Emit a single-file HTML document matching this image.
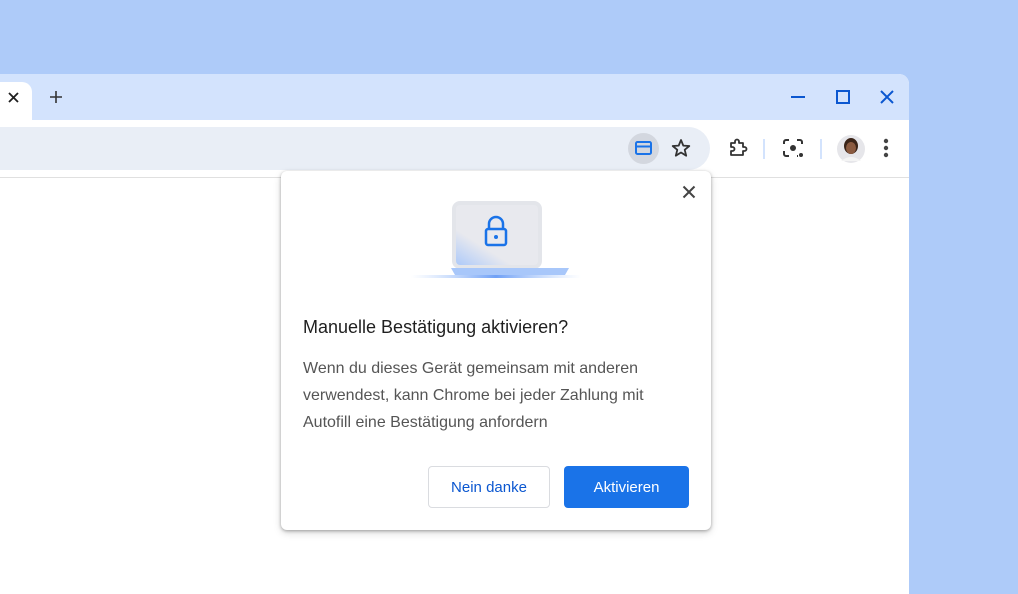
<!DOCTYPE html>
<html><head><meta charset="utf-8"><style>
*{margin:0;padding:0;box-sizing:border-box}
body{width:1018px;height:573px;background:#aecbf9;position:relative;overflow:hidden;font-family:"Liberation Sans",sans-serif}
.win{position:absolute;left:0;top:74px;width:909px;height:520px;background:#fff;border-top-right-radius:10px;overflow:hidden}
.strip{position:absolute;left:0;top:0;width:909px;height:46px;background:#d3e3fd}
.tab{position:absolute;left:0;top:8px;width:32px;height:40px;background:#fff;border-top-right-radius:10px}
.tb{position:absolute;left:0;top:46px;width:909px;height:58px;background:#fff;border-bottom:1px solid #e0e0e0}
.omni{position:absolute;left:0;top:7px;width:710px;height:43px;background:#e9eef6;border-radius:0 22px 22px 0}
.dlg{position:absolute;left:281px;top:171px;width:430px;height:359px;background:#fff;border-radius:6px;box-shadow:0 1px 3px rgba(0,0,0,.3),0 3px 8px rgba(0,0,0,.15)}
.t{position:absolute;left:22px;top:146px;font-size:18px;color:#1f1f1f}
.b{position:absolute;left:22px;top:184px;width:380px;font-size:16px;line-height:27px;color:#555}
.btn{position:absolute;top:295px;height:42px;border-radius:4px;font-size:15px;display:flex;align-items:center;justify-content:center}
</style></head><body>
<div class="win">
 <div class="strip"></div>
 <div class="tab"></div>
 <svg style="position:absolute;left:7px;top:17px" width="13" height="13"><path d="M2 2L11 11M11 2L2 11" stroke="#1f1f1f" stroke-width="1.8"/></svg>
 <svg style="position:absolute;left:49px;top:16px" width="14" height="14"><path d="M7 1V13M1 7H13" stroke="#333" stroke-width="1.6"/></svg>
 <svg style="position:absolute;left:790px;top:15px" width="110" height="16"><path d="M1 8H15" stroke="#0b57d0" stroke-width="2"/><rect x="47" y="2" width="12" height="12" fill="none" stroke="#0b57d0" stroke-width="2"/><path d="M91 2L103 14M103 2L91 14" stroke="#0b57d0" stroke-width="2"/></svg>
 <div class="tb">
  <div class="omni"></div>
  <div style="position:absolute;left:628px;top:13px;width:31px;height:31px;border-radius:50%;background:#d3d7df"></div>
  <svg style="position:absolute;left:635px;top:21px" width="17" height="15"><rect x="1" y="1" width="15" height="12" rx="1.5" fill="none" stroke="#1a73e8" stroke-width="2"/><path d="M1 5.5H16" stroke="#1a73e8" stroke-width="2"/></svg>
  <svg style="position:absolute;left:671px;top:18px" width="20" height="20"><path d="M10 2L12.3 7.6L18.3 8L13.7 11.8L15.2 17.7L10 14.5L4.8 17.7L6.3 11.8L1.7 8L7.7 7.6Z" fill="none" stroke="#333" stroke-width="1.8" stroke-linejoin="round"/></svg>
  <svg style="position:absolute;left:728px;top:18px" width="20" height="20"><path d="M3 5H7V3.5A2 2 0 0 1 11 3.5V5H15V9H16.5A2 2 0 0 1 16.5 13H15V17H3V13H4.5A2 2 0 0 0 4.5 9H3Z" fill="none" stroke="#333" stroke-width="1.8" stroke-linejoin="round"/></svg>
  <div style="position:absolute;left:763px;top:19px;width:2px;height:20px;background:#d3e3fd"></div>
  <svg style="position:absolute;left:782px;top:18px" width="22" height="20"><path d="M2 6V4A2 2 0 0 1 4 2H7M15 2H18A2 2 0 0 1 20 4V6M2 13V16A2 2 0 0 0 4 18H7M15 18H16" fill="none" stroke="#333" stroke-width="2"/><circle cx="11" cy="10" r="3" fill="#333"/><circle cx="19" cy="17" r="2" fill="#333"/></svg>
  <div style="position:absolute;left:820px;top:19px;width:2px;height:20px;background:#d3e3fd"></div>
  <svg style="position:absolute;left:836px;top:14px" width="30" height="30"><circle cx="15" cy="15" r="14" fill="#e6e6ea"/><ellipse cx="15" cy="12" rx="7" ry="8" fill="#3a2418"/><ellipse cx="15" cy="14" rx="5" ry="6" fill="#8a5a40"/><path d="M5 27Q15 19 25 27" fill="#f4f4f4"/></svg>
  <svg style="position:absolute;left:882px;top:18px" width="8" height="22"><circle cx="4" cy="3" r="2.2" fill="#444"/><circle cx="4" cy="10" r="2.2" fill="#444"/><circle cx="4" cy="17" r="2.2" fill="#444"/></svg>
 </div>
</div>
<div class="dlg">
 <svg style="position:absolute;left:401px;top:14px" width="14" height="14"><path d="M1.5 1.5L12.5 12.5M12.5 1.5L1.5 12.5" stroke="#444" stroke-width="2"/></svg>
 <svg style="position:absolute;left:130px;top:28px" width="170" height="82">
  <defs><linearGradient id="g" x1="0" y1="1" x2="0.6" y2="0.3"><stop offset="0" stop-color="#a8c7fa"/><stop offset="0.5" stop-color="#e8e9ee"/></linearGradient>
  <linearGradient id="h" x1="0" x2="1"><stop offset="0" stop-color="#a8c7fa" stop-opacity="0"/><stop offset="0.5" stop-color="#6fa0f6"/><stop offset="1" stop-color="#a8c7fa" stop-opacity="0"/></linearGradient></defs>
  <rect x="43" y="4" width="86" height="64" rx="6" fill="url(#g)" stroke="#e3e5ea" stroke-width="4"/>
  <path d="M40 69H158L154 76H44Z" fill="#a8c7fa"/>
  <rect x="0" y="76" width="170" height="3" fill="url(#h)"/>
  <path d="M78 30V25A7 7 0 0 1 92 25V30" fill="none" stroke="#1a73e8" stroke-width="2.5"/>
  <rect x="75" y="30" width="20" height="16" rx="2" fill="none" stroke="#1a73e8" stroke-width="2.5"/>
  <circle cx="85" cy="38" r="2" fill="#1a73e8"/>
 </svg>
 <div class="t">Manuelle Bestätigung aktivieren?</div>
 <div class="b">Wenn du dieses Gerät gemeinsam mit anderen verwendest, kann Chrome bei jeder Zahlung mit Autofill eine Bestätigung anfordern</div>
 <div class="btn" style="left:147px;width:122px;border:1px solid #dadce0;color:#0b57d0">Nein danke</div>
 <div class="btn" style="left:283px;width:125px;background:#1a73e8;color:#fff">Aktivieren</div>
</div>
</body></html>
